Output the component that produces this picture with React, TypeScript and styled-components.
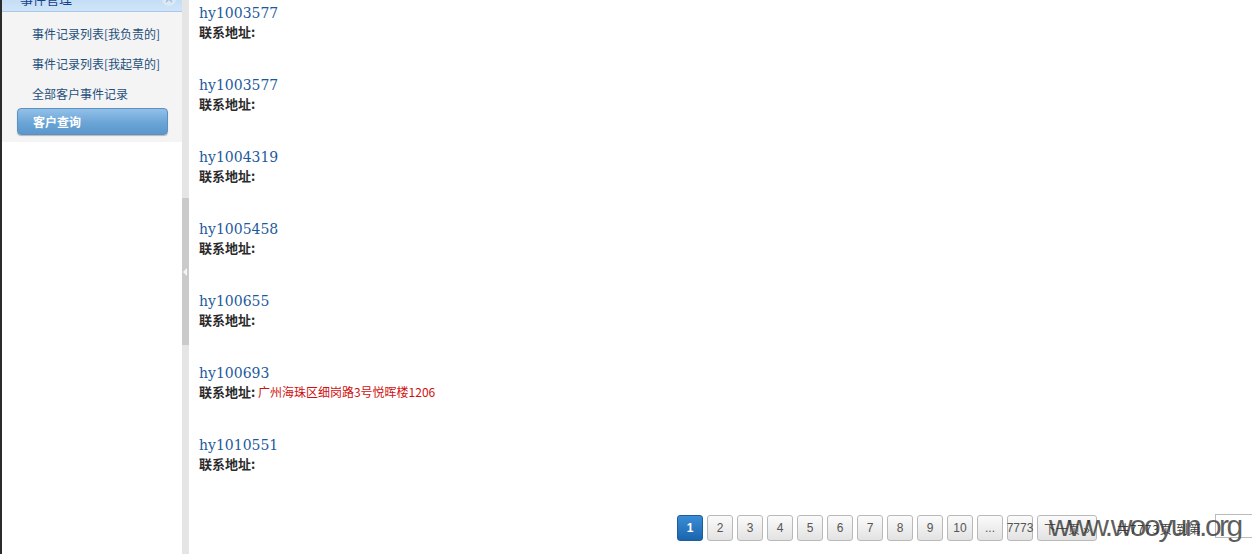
import React from "react";
import styled, { createGlobalStyle } from "styled-components";

const Global = createGlobalStyle`
  html, body { margin: 0; padding: 0; background: #fff; overflow: hidden; }
  body { font-family: "Liberation Sans", "Noto Sans CJK SC", sans-serif; font-size: 12px; }
  * { box-sizing: border-box; }
`;

const Page = styled.div`
  position: relative;
  display: flex;
  height: 554px;
  width: 1252px;
  overflow: hidden;
`;

const Sidebar = styled.aside`
  width: 182px;
  flex: none;
  border-left: 2px solid #2b2b2b;
  display: flex;
  flex-direction: column;
  background: #fff;
`;

const PanelHeader = styled.div`
  height: 26px;
  margin-top: -14px;
  display: flex;
  align-items: center;
  justify-content: space-between;
  padding: 0 6px 0 18px;
  background: linear-gradient(#b7d5f2, #cfe4f8);
  border-bottom: 1px solid #a9c9ea;
  color: #15428b;
  font-family: "Noto Sans CJK SC", sans-serif;
  font-size: 13px;
`;

const Chevron = styled.span`
  width: 14px;
  height: 14px;
  border-radius: 50%;
  background: #dbe9f7;
  display: flex;
  align-items: center;
  justify-content: center;
`;

const Menu = styled.nav`
  background: #f4f4f4;
  padding: 6px 14px 7px 15px;
  display: flex;
  flex-direction: column;
`;

const MenuItem = styled.div<{ $active?: boolean }>`
  height: ${(p) => (p.$active ? "27px" : "30px")};
  display: flex;
  align-items: center;
  padding-left: 15px;
  font-family: "Noto Sans CJK SC", sans-serif;
  font-size: 12px;
  white-space: nowrap;
  color: ${(p) => (p.$active ? "#fff" : "#1f4f7c")};
  font-weight: ${(p) => (p.$active ? 700 : 400)};
  border-radius: ${(p) => (p.$active ? "4px" : "0")};
  border: ${(p) => (p.$active ? "1px solid #5b90c2" : "none")};
  background: ${(p) => (p.$active ? "linear-gradient(#93c0e8, #6aa5d6 55%, #5b97cc)" : "transparent")};
  box-shadow: ${(p) => (p.$active ? "0 1px 1px rgba(0,0,0,0.25)" : "none")};
`;

const Splitter = styled.div`
  width: 7px;
  flex: none;
  background: #e5e5e5;
  display: flex;
  flex-direction: column;
  padding-top: 198px;
`;

const Handle = styled.div`
  height: 147px;
  background: #cacaca;
  display: flex;
  align-items: center;
  justify-content: center;
  padding-right: 1px;
`;

const Main = styled.main`
  flex: 1;
  min-width: 0;
  padding: 3px 0 0 10px;
  display: flex;
  flex-direction: column;
  overflow: hidden;
`;

const Record = styled.div`
  margin-bottom: 34px;
`;

const Title = styled.div`
  font-family: "DejaVu Serif", "Liberation Serif", serif;
  font-size: 14px;
  line-height: 20px;
  color: #1d5a9b;
`;

const Line = styled.div`
  font-family: "Noto Sans CJK SC", sans-serif;
  font-size: 12px;
  line-height: 18px;
  white-space: nowrap;
`;

const Label = styled.span`
  font-weight: 700;
  font-size: 13px;
  color: #2a2a2a;
`;

const Address = styled.span`
  color: #d01010;
  font-size: 12px;
`;

const Pager = styled.div`
  margin-top: 8px;
  padding-left: 478px;
  display: flex;
  align-items: center;
  gap: 4px;
  white-space: nowrap;
`;

const PageBtn = styled.span<{ $current?: boolean; $wide?: boolean }>`
  flex: none;
  width: ${(p) => (p.$wide ? "60px" : "26px")};
  height: 26px;
  display: flex;
  align-items: center;
  justify-content: center;
  border-radius: 3px;
  font-family: "Liberation Sans", "Noto Sans CJK SC", sans-serif;
  font-size: 12px;
  overflow: visible;
  color: ${(p) => (p.$current ? "#fff" : "#555")};
  font-weight: ${(p) => (p.$current ? 700 : 400)};
  border: 1px solid ${(p) => (p.$current ? "#1c5d9c" : "#b9b9b9")};
  background: ${(p) => (p.$current ? "linear-gradient(#3b8dd6, #1a65ad)" : "linear-gradient(#fbfbfb, #e2e2e2)")};
`;

const PagerText = styled.span`
  margin-left: 16px;
  font-family: "Noto Sans CJK SC", sans-serif;
  font-size: 12px;
  color: #444;
  letter-spacing: 0.8px;
`;

const JumpInput = styled.span`
  flex: none;
  margin-left: 9px;
  width: 40px;
  height: 24px;
  margin-top: -4px;
  border: 1px solid #bbb;
  background: #fff;
`;

const Watermark = styled.div`
  position: absolute;
  left: 1049px;
  top: 511px;
  font-family: "Liberation Sans", sans-serif;
  font-size: 30px;
  line-height: 30px;
  letter-spacing: -2.5px;
  color: rgba(50, 50, 50, 0.78);
  pointer-events: none;
  white-space: nowrap;
`;

const records: { id: string; addr?: string }[] = [
  { id: "hy1003577" },
  { id: "hy1003577" },
  { id: "hy1004319" },
  { id: "hy1005458" },
  { id: "hy100655" },
  { id: "hy100693", addr: "广州海珠区细岗路3号悦晖楼1206" },
  { id: "hy1010551" },
];

export default function App() {
  return (
    <>
      <Global />
      <Page>
        <Sidebar>
          <PanelHeader>
            <span>事件管理</span>
            <Chevron>
              <svg width="10" height="10" viewBox="0 0 10 10">
                <path d="M2 5 L5 2 L8 5 M2 8 L5 5 L8 8" fill="none" stroke="#9fb9d4" strokeWidth="1.3" />
              </svg>
            </Chevron>
          </PanelHeader>
          <Menu>
            <MenuItem>事件记录列表[我负责的]</MenuItem>
            <MenuItem>事件记录列表[我起草的]</MenuItem>
            <MenuItem>全部客户事件记录</MenuItem>
            <MenuItem $active>客户查询</MenuItem>
          </Menu>
        </Sidebar>
        <Splitter>
          <Handle>
            <svg width="4" height="8" viewBox="0 0 4 8">
              <path d="M4 0 L0 4 L4 8 Z" fill="#f4f4f4" />
            </svg>
          </Handle>
        </Splitter>
        <Main>
          {records.map((r, i) => (
            <Record key={i}>
              <Title>{r.id}</Title>
              <Line>
                <Label>联系地址:</Label>
                {r.addr && <Address> {r.addr}</Address>}
              </Line>
            </Record>
          ))}
          <Pager>
            <PageBtn $current>1</PageBtn>
            {["2", "3", "4", "5", "6", "7", "8", "9", "10", "...", "7773"].map((n) => (
              <PageBtn key={n}>{n}</PageBtn>
            ))}
            <PageBtn $wide>下一页 »</PageBtn>
            <PagerText>共7773页 到第</PagerText>
            <JumpInput />
          </Pager>
        </Main>
        <Watermark>www.wooyun.org</Watermark>
      </Page>
    </>
  );
}
